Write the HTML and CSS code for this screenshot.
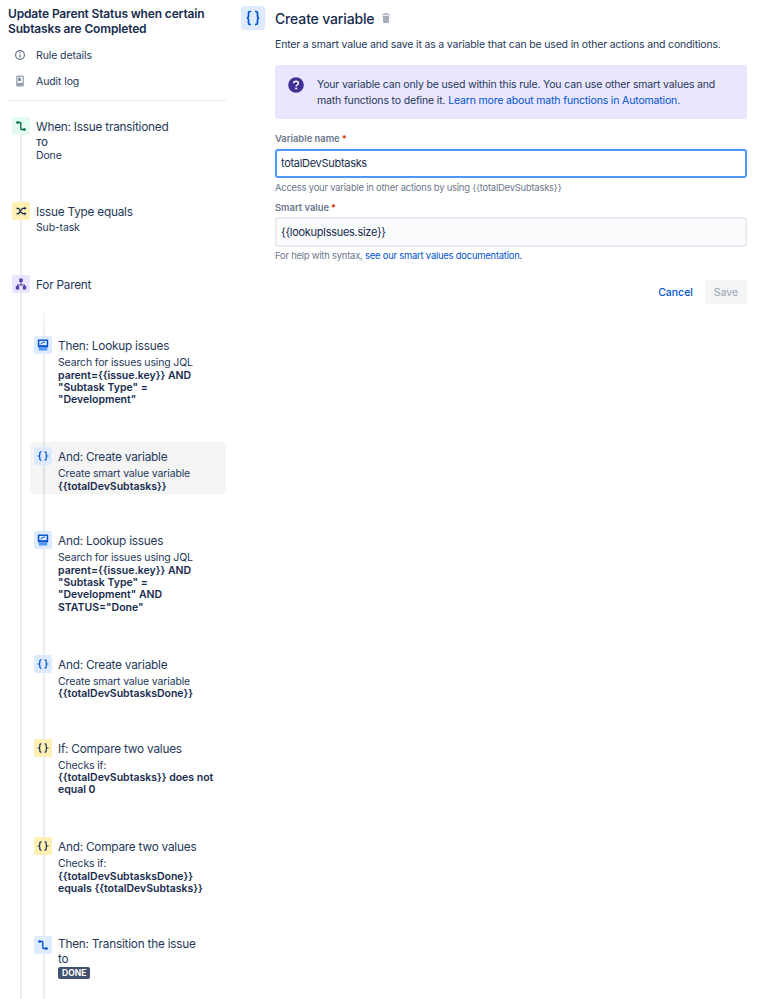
FILE: index.html
```html
<!DOCTYPE html>
<html lang="en">
<head>
    <meta charset="UTF-8">
    <meta name="viewport" content="width=device-width, initial-scale=1.0">
    <title>Create variable</title>
    <link rel="stylesheet" href="styles.css">
</head>
<body>
    <div class="app">
        <aside class="sidebar">
            <h1 class="rule-title">Update Parent Status when certain Subtasks are Completed</h1>
            <nav class="side-nav">
                <div class="side-link">
                    <svg class="side-icon" viewBox="0 0 12 12"><circle cx="6" cy="6" r="4.4" fill="none" stroke="#5e6c84" stroke-width="1.1"/><path d="M6 5.400v3" stroke="#5e6c84" stroke-width="1.2"/><circle cx="6" cy="3.800" r=".7" fill="#5e6c84"/></svg>
                    <span>Rule details</span>
                </div>
                <div class="side-link">
                    <svg class="side-icon" viewBox="0 0 12 12"><path d="M3.200 .5h5.600a1 1 0 0 1 1 1v9a1 1 0 0 1-1 1H3.200a1 1 0 0 1-1-1v-9a1 1 0 0 1 1-1z" fill="#97a0af"/><path d="M3.500 1.800h5v6h-5z" fill="#fff"/><path d="M4.300 2.700h2.400v3.300H4.300z" fill="#6b778c"/></svg>
                    <span>Audit log</span>
                </div>
            </nav>

            <div class="tree">
                <div class="step step-when">
                    <span class="step-icon icon-green">
                        <svg viewBox="0 0 18 18"><use href="#i-transition" stroke="#006644" fill="#006644"/></svg>
                    </span>
                    <div class="step-text">
                        <div class="step-title">When: Issue transitioned</div>
                        <div class="step-sub"><span class="to-label">TO</span><br>Done</div>
                    </div>
                </div>
                <div class="step step-type">
                    <span class="step-icon icon-yellow">
                        <svg viewBox="0 0 18 18"><path d="M4.500 6.300h2l4 5.400h2.500M4.500 11.700h2l4-5.400h2.500" fill="none" stroke="#172b4d" stroke-width="1.200"/><path d="M12.500 4.500l2 1.800-2 1.800zM12.500 9.900l2 1.800-2 1.800z" fill="#172b4d"/></svg>
                    </span>
                    <div class="step-text">
                        <div class="step-title">Issue Type equals</div>
                        <div class="step-sub">Sub-task</div>
                    </div>
                </div>
                <div class="step step-parent">
                    <span class="step-icon icon-purple">
                        <svg viewBox="0 0 18 18"><path d="M9 6v4M5.500 12.500V10h7v2.500" fill="none" stroke="#5243aa" stroke-width="1.100"/><path d="M7.300 3.500h3.400v3.400H7.300zM3.800 11h3.400v3.400H3.800zM10.800 11h3.400v3.400h-3.400z" fill="#5243aa"/></svg>
                    </span>
                    <div class="step-text">
                        <div class="step-title">For Parent</div>
                    </div>
                </div>

                <div class="branch">
                    <div class="step">
                        <span class="step-icon icon-blue">
                            <svg viewBox="0 0 18 18"><use href="#i-lookup"/></svg>
                        </span>
                        <div class="step-text">
                            <div class="step-title">Then: Lookup issues</div>
                            <div class="step-sub">Search for issues using JQL<br><b>parent={{issue.key}} AND "Subtask Type" = "Development"</b></div>
                        </div>
                    </div>
                    <div class="step step-var step-selected">
                        <span class="step-icon icon-blue">
                            <svg viewBox="0 0 18 18"><use href="#i-braces" stroke="#0052cc"/></svg>
                        </span>
                        <div class="step-text">
                            <div class="step-title">And: Create variable</div>
                            <div class="step-sub">Create smart value variable<br><b>{{totalDevSubtasks}}</b></div>
                        </div>
                    </div>
                    <div class="step">
                        <span class="step-icon icon-blue">
                            <svg viewBox="0 0 18 18"><use href="#i-lookup"/></svg>
                        </span>
                        <div class="step-text">
                            <div class="step-title">And: Lookup issues</div>
                            <div class="step-sub">Search for issues using JQL<br><b>parent={{issue.key}} AND "Subtask Type" = "Development" AND STATUS="Done"</b></div>
                        </div>
                    </div>
                    <div class="step step-var">
                        <span class="step-icon icon-blue">
                            <svg viewBox="0 0 18 18"><use href="#i-braces" stroke="#0052cc"/></svg>
                        </span>
                        <div class="step-text">
                            <div class="step-title">And: Create variable</div>
                            <div class="step-sub">Create smart value variable<br><b>{{totalDevSubtasksDone}}</b></div>
                        </div>
                    </div>
                    <div class="step">
                        <span class="step-icon icon-yellow">
                            <svg viewBox="0 0 18 18"><use href="#i-braces" stroke="#172b4d"/></svg>
                        </span>
                        <div class="step-text">
                            <div class="step-title">If: Compare two values</div>
                            <div class="step-sub">Checks if:<br><b>{{totalDevSubtasks}} does not equal 0</b></div>
                        </div>
                    </div>
                    <div class="step">
                        <span class="step-icon icon-yellow">
                            <svg viewBox="0 0 18 18"><use href="#i-braces" stroke="#172b4d"/></svg>
                        </span>
                        <div class="step-text">
                            <div class="step-title">And: Compare two values</div>
                            <div class="step-sub">Checks if:<br><b>{{totalDevSubtasksDone}} equals {{totalDevSubtasks}}</b></div>
                        </div>
                    </div>
                    <div class="step step-transition">
                        <span class="step-icon icon-blue">
                            <svg viewBox="0 0 18 18"><use href="#i-transition" stroke="#0052cc" fill="#0052cc"/></svg>
                        </span>
                        <div class="step-text">
                            <div class="step-title">Then: Transition the issue to</div>
                            <span class="lozenge">DONE</span>
                        </div>
                    </div>
                </div>
            </div>
        </aside>

        <main class="panel">
            <header class="panel-header">
                <span class="panel-icon">
                    <svg viewBox="0 0 24 24"><path d="M10 5.500H9a1.500 1.500 0 0 0-1.500 1.500v3.300c0 .9-.5 1.500-1.500 1.700 1 .2 1.500.8 1.500 1.700V17A1.500 1.500 0 0 0 9 18.500h1M14 5.500h1A1.500 1.500 0 0 1 16.500 7v3.300c0 .9.5 1.500 1.500 1.700-1 .2-1.500.8-1.500 1.700V17a1.500 1.500 0 0 1-1.500 1.500h-1" fill="none" stroke="#0052cc" stroke-width="1.700"/></svg>
                </span>
                <h2 class="panel-title">Create variable</h2>
                <svg class="trash" viewBox="0 0 10 12"><path d="M1 2.200h8v1.100H1zM3.500 1h3v1h-3z" fill="#a5adba"/><path d="M1.700 4h6.600l-.6 7H2.300z" fill="#a5adba"/></svg>
            </header>

            <div class="panel-body">
                <p class="intro">Enter a smart value and save it as a variable that can be used in other actions and conditions.</p>

                <div class="notice">
                    <svg class="notice-icon" viewBox="0 0 16 16"><circle cx="8" cy="8" r="7.800" fill="#403294"/><path d="M5.700 6.300C5.800 5 6.800 4.300 8 4.300c1.300 0 2.300.8 2.300 1.900 0 1-.6 1.400-1.200 1.800-.6.400-1 .7-1 1.400" fill="none" stroke="#fff" stroke-width="1.500"/><circle cx="8.100" cy="11.600" r="1" fill="#fff"/></svg>
                    <p>Your variable can only be used within this rule. You can use other smart values and math functions to define it. <a href="#">Learn more about math functions in Automation.</a></p>
                </div>

                <form class="form">
                    <div class="field">
                        <label class="field-label" for="var-name">Variable name<span class="req">*</span></label>
                        <input class="field-input is-focused" id="var-name" value="totalDevSubtasks">
                        <div class="field-help">Access your variable in other actions by using {{totalDevSubtasks}}</div>
                    </div>
                    <div class="field">
                        <label class="field-label" for="smart-value">Smart value<span class="req">*</span></label>
                        <input class="field-input" id="smart-value" value="{{lookupIssues.size}}">
                        <div class="field-help">For help with syntax, <a href="#">see our smart values documentation.</a></div>
                    </div>
                    <div class="form-actions">
                        <button class="btn-cancel" type="button">Cancel</button>
                        <button class="btn-save" type="button" disabled>Save</button>
                    </div>
                </form>
            </div>
        </main>
    </div>

    <svg class="icon-defs" aria-hidden="true">
        <defs>
            <g id="i-transition">
                <circle cx="5.500" cy="5.500" r="1.300" stroke="none"/>
                <circle cx="12.500" cy="12.500" r="1.300" stroke="none"/>
                <path d="M5.500 5.500H8a.8.8 0 0 1 .8.8v5.400a.8.8 0 0 0 .8.8h2.900" fill="none" stroke-width="1.300"/>
            </g>
            <g id="i-braces" fill="none" stroke-width="1.200">
                <path d="M7.500 4.800h-.6c-.7 0-1.100.4-1.100 1.100v1.900c0 .6-.3 1-1 1.200.7.200 1 .6 1 1.200v1.900c0 .7.400 1.100 1.100 1.100h.6"/>
                <path d="M10.500 4.800h.6c.7 0 1.100.4 1.100 1.100v1.900c0 .6.300 1 1 1.200-.7.200-1 .6-1 1.200v1.900c0 .7-.4 1.100-1.100 1.100h-.6"/>
            </g>
            <g id="i-lookup">
                <path d="M4.500 3.500h9a.7.700 0 0 1 .7.700v6.500a.7.700 0 0 1-.7.700h-9a.7.700 0 0 1-.7-.7V4.200a.7.700 0 0 1 .7-.7z" fill="#0052cc"/>
                <path d="M5.300 4.900h7.400v4.300H5.300z" fill="#deebff"/>
                <path d="M6.500 8l3.500-2.200 1 .8" fill="none" stroke="#0052cc"/>
                <path d="M4.800 12h8.400v2a.5.500 0 0 1-.5.500H5.300a.5.500 0 0 1-.5-.5z" fill="#4c9aff"/>
            </g>
        </defs>
    </svg>
</body>
</html>
```

FILE: styles.css
```css
:root {
    --text: #172b4d;
    --text-body: #253858;
    --text-muted: #6b778c;
    --line: #ebecf0;
    --link: #0052cc;
}

* {
    margin: 0;
    padding: 0;
    box-sizing: border-box;
}

body {
    font-family: 'Inter', 'Liberation Sans', sans-serif;
    color: var(--text);
    background-color: #fff;
    font-size: 11px;
}

a {
    color: var(--link);
    text-decoration: none;
}

.icon-defs {
    display: none;
}

.app {
    display: flex;
    height: 100vh;
    overflow: hidden;
}

/* left column */
.sidebar {
    width: 218px;
    margin: 0 15px 0 8px;
    flex-shrink: 0;
}

.rule-title {
    font-size: 12px;
    font-weight: 600;
    letter-spacing: -0.15px;
    line-height: 14.6px;
    padding-top: 7px;
}

.side-nav {
    padding-top: 6px;
    border-bottom: 1px solid var(--line);
    height: 65px;
}

.side-link {
    display: flex;
    align-items: center;
    height: 26px;
    padding-left: 6px;
    gap: 10px;
    color: var(--text-body);
    font-size: 10.500px;
    letter-spacing: -0.1px;
}

.side-icon {
    width: 12px;
    height: 12px;
}

.tree {
    position: relative;
    padding-top: 11px;
}

/* outer connector line */
.tree::before {
    content: "";
    position: absolute;
    left: 11.500px;
    top: 34px;
    bottom: -999px;
    width: 2px;
    background-color: var(--line);
}

.step {
    position: relative;
    display: flex;
    gap: 6px;
    padding: 5px 4px 0;
}

.branch .step {
    padding-bottom: 1px;
    min-height: 52px;
    margin-bottom: 34.400px;
    border-radius: 3px;
}

.branch .step-var {
    margin-bottom: 32px;
}

.step-selected {
    background-color: rgba(0, 0, 0, 0.04);
}

.step-when {
    height: 85px;
}

.step-type {
    height: 73px;
}

.step-parent {
    height: 61px;
}

.step-icon {
    width: 18px;
    height: 18px;
    flex-shrink: 0;
    border-radius: 2px;
    display: block;
    position: relative;
}

.step-icon svg {
    display: block;
    width: 18px;
    height: 18px;
}

.icon-green { background-color: #e3fcef; }
.icon-yellow { background-color: #fff0b3; }
.icon-purple { background-color: #eae6ff; }
.icon-blue { background-color: #deebff; }

.step-text {
    min-width: 0;
    flex: 1;
}

.step-title {
    font-size: 11.800px;
    letter-spacing: -0.22px;
    line-height: 15px;
    padding: 3px 16px 0 0;
    color: var(--text-body);
}

.step-transition .step-title {
    padding-top: 1px;
}

.step-sub {
    font-size: 10.500px;
    letter-spacing: -0.15px;
    line-height: 12.400px;
    padding-top: 2px;
    color: var(--text-body);
}

.branch .step-sub {
    padding-top: 3px;
}

.step-sub b {
    font-weight: 600;
    letter-spacing: 0;
    color: var(--text);
}

.to-label {
    font-size: 8.500px;
    font-weight: 600;
}

.branch {
    position: relative;
    margin-left: 22px;
}

.branch::before {
    content: "";
    position: absolute;
    left: 12.500px;
    top: -25px;
    bottom: -999px;
    width: 2px;
    background: linear-gradient(#fff, var(--line) 25px);
}

.lozenge {
    display: block;
    width: fit-content;
    background-color: #42526e;
    color: #fff;
    font-size: 8.500px;
    font-weight: 700;
    line-height: 12px;
    padding: 0 4px;
    border-radius: 2px;
}

/* right column */
.panel {
    flex: 1;
    min-width: 0;
    padding: 6px 18px 0 0;
}

.panel-header {
    display: flex;
    align-items: center;
}

.panel-icon {
    width: 24px;
    height: 24px;
    background-color: #deebff;
    border-radius: 3px;
    margin-right: 10px;
}

.panel-icon svg {
    display: block;
    width: 24px;
    height: 24px;
}

.panel-title {
    font-size: 14px;
    font-weight: 500;
    letter-spacing: -0.15px;
    color: var(--text);
    margin-right: 7px;
}

.trash {
    width: 10px;
    height: 12px;
}

.panel-body {
    padding-left: 34px;
}

.intro {
    margin-top: 8px;
    line-height: 14px;
    font-size: 10.500px;
    letter-spacing: -0.17px;
    color: var(--text-body);
}

.notice {
    display: flex;
    gap: 13px;
    margin-top: 13px;
    height: 54px;
    padding: 12px 13px;
    border-radius: 3px;
    background-color: #eae6ff;
    color: var(--text-body);
    line-height: 15.500px;
    font-size: 10.500px;
    letter-spacing: -0.16px;
}

.notice-icon {
    width: 16px;
    height: 16px;
    flex-shrink: 0;
}

.form {
    margin-top: 14px;
}

.field {
    margin-bottom: 8px;
}

.field-label {
    display: block;
    font-size: 9.400px;
    font-weight: 600;
    line-height: 12px;
    color: var(--text-muted);
    margin-bottom: 3.500px;
}

.req {
    color: #de350b;
    margin-left: 2px;
}

.field-input {
    display: block;
    width: 100%;
    height: 29.500px;
    border: 2px solid var(--line);
    border-radius: 3px;
    background-color: #fafbfc;
    padding: 0 4px;
    font-family: inherit;
    font-size: 11px;
    letter-spacing: -0.3px;
    color: var(--text);
    outline: none;
}

.is-focused {
    background-color: #fff;
    border-color: #4c9aff;
}

.field-help {
    font-size: 9.400px;
    letter-spacing: -0.2px;
    line-height: 12px;
    margin-top: 3.500px;
    color: var(--text-muted);
}

.form-actions {
    display: flex;
    justify-content: flex-end;
    align-items: center;
    gap: 12px;
    margin-top: 18px;
}

.btn-cancel,
.btn-save {
    font-family: inherit;
    font-size: 10.500px;
    font-weight: 500;
    border: none;
    background: none;
    height: 24px;
    border-radius: 3px;
}

.btn-cancel {
    color: var(--link);
}

.btn-save {
    width: 42px;
    background-color: #f4f5f7;
    color: #a5adba;
}
```
